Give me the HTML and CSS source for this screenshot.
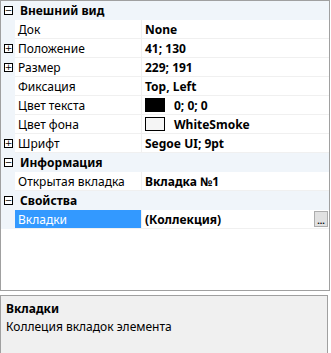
FILE: index.html
```html
<!DOCTYPE html>
<html>
<head>
    <title>Свойства</title>
    <link rel="stylesheet" href="styles.css">
</head>
<body>
    <div class="grid">
        <div class="cat"><span class="toggle">&minus;</span>Внешний вид</div>
        <div class="prop"><span class="margin"></span><span class="name">Док</span><span class="value">None</span></div>
        <div class="prop"><span class="margin"><span class="toggle">+</span></span><span class="name">Положение</span><span class="value">41; 130</span></div>
        <div class="prop"><span class="margin"><span class="toggle">+</span></span><span class="name">Размер</span><span class="value">229; 191</span></div>
        <div class="prop"><span class="margin"></span><span class="name">Фиксация</span><span class="value">Top, Left</span></div>
        <div class="prop"><span class="margin"></span><span class="name">Цвет текста</span><span class="value"><span class="swatch black"></span>0; 0; 0</span></div>
        <div class="prop"><span class="margin"></span><span class="name">Цвет фона</span><span class="value"><span class="swatch smoke"></span>WhiteSmoke</span></div>
        <div class="prop"><span class="margin"><span class="toggle">+</span></span><span class="name">Шрифт</span><span class="value">Segoe UI; 9pt</span></div>
        <div class="cat"><span class="toggle">&minus;</span>Информация</div>
        <div class="prop"><span class="margin"></span><span class="name">Открытая вкладка</span><span class="value">Вкладка №1</span></div>
        <div class="cat"><span class="toggle">&minus;</span>Свойства</div>
        <div class="prop selected"><span class="margin"></span><span class="name">Вкладки</span><span class="value">(Коллекция)<span class="ellipsis">...</span></span></div>
    </div>

    <div class="desc">
        <div class="desc-title">Вкладки</div>
        <div class="desc-text">Коллеция вкладок элемента</div>
    </div>
</body>
</html>
```

FILE: styles.css
```css
body { margin: 0; background: #fff; font-family: "Noto Sans", "Open Sans", sans-serif; font-size: 12px; color: #000; width: 331px; }

.grid {
    width: 328px; height: 289px; border: 1px solid #a0a0a0;
    background: #fff;
}
.cat {
    display: flex; align-items: center; height: 19px;
    background: #f0f5fa; font-weight: bold; padding-left: 3px;
}
.cat .toggle { margin-right: 7px; }
.prop {
    display: grid; grid-template-columns: 14px 127px 1fr; height: 19px;
}
.margin { background: #f0f5fa; display: flex; align-items: center; padding-left: 3px; }
.name, .value {
    display: flex; align-items: center; border-bottom: 1px solid #f0f0f0;
    white-space: nowrap; overflow: hidden;
}
.name { padding-left: 3px; border-right: 1px solid #f0f0f0; }
.value { padding-left: 3px; font-weight: bold; position: relative; }
.selected .name { background: #3399ff; color: #fff; }

.toggle {
    display: inline-flex; align-items: center; justify-content: center;
    width: 7px; height: 7px; border: 1px solid #000; background: #fff;
    font-size: 9px; font-weight: normal; line-height: 7px; font-family: "DejaVu Sans", sans-serif;
}

.swatch { width: 18px; height: 12px; border: 1px solid #000; margin: 0 9px 0 0; }
.black { background: #000; }
.smoke { background: #f5f5f5; }

.ellipsis {
    position: absolute; right: 1px; top: 1px;
    width: 12px; height: 14px; border: 1px solid #adadad; background: #e1e1e1;
    font-size: 9px; font-weight: bold; text-align: center; line-height: 17px;
}

.desc {
    margin-top: 4px; width: 326px; height: 54px; border: 1px solid #a0a0a0;
    background: #f0f0f0; padding: 4px 0 0 0;
}
.desc-title { font-weight: bold; padding-left: 5px; }
.desc-text { padding-left: 5px; margin-top: 1px; }
```
